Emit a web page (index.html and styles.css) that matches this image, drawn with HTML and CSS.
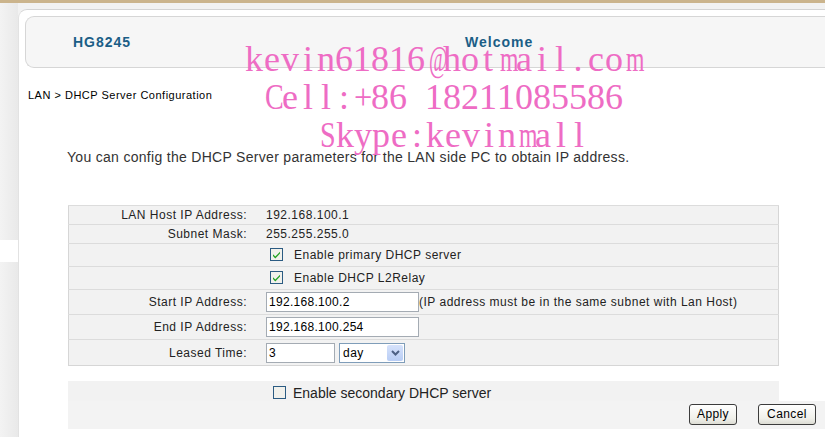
FILE: index.html
```html
<!DOCTYPE html>
<html>
<head>
<meta charset="utf-8">
<link rel="stylesheet" href="styles.css">
</head>
<body>
<div class="top-edge"></div>
<div class="page">
  <div class="sidebar">
    <div class="side-a"></div>
    <div class="side-gap"></div>
    <div class="side-b"></div>
  </div>
  <div class="main">
    <div class="header">
      <span class="model">HG8245</span>
      <span class="welcome">Welcome</span>
    </div>
    <div class="crumb">LAN &gt; DHCP Server Configuration</div>
    <div class="desc">You can config the DHCP Server parameters for the LAN side PC to obtain IP address.</div>
    <table class="cfg">
      <tr class="r1"><td class="lbl">LAN Host IP Address:</td><td class="val">192.168.100.1</td></tr>
      <tr class="r1"><td class="lbl">Subnet Mask:</td><td class="val">255.255.255.0</td></tr>
      <tr class="r2"><td class="lbl"></td><td class="val"><span class="cb on"><svg width="13" height="13" viewBox="0 0 13 13"><rect x="0.5" y="0.5" width="12" height="12" fill="#f1f1ec" stroke="#2b5b82"/><path d="M3 6.2 L5.3 8.6 L10 3.8 L10 5.6 L5.3 10.4 L3 8 Z" fill="#21a121"/></svg></span>Enable primary DHCP server</td></tr>
      <tr class="r2"><td class="lbl"></td><td class="val"><span class="cb on"><svg width="13" height="13" viewBox="0 0 13 13"><rect x="0.5" y="0.5" width="12" height="12" fill="#f1f1ec" stroke="#2b5b82"/><path d="M3 6.2 L5.3 8.6 L10 3.8 L10 5.6 L5.3 10.4 L3 8 Z" fill="#21a121"/></svg></span>Enable DHCP L2Relay</td></tr>
      <tr class="r3"><td class="lbl">Start IP Address:</td><td class="val"><span class="inp w152">192.168.100.2</span><span class="hint">(IP address must be in the same subnet with Lan Host)</span></td></tr>
      <tr class="r3"><td class="lbl">End IP Address:</td><td class="val"><span class="inp w152">192.168.100.254</span></td></tr>
      <tr class="r4"><td class="lbl">Leased Time:</td><td class="val"><span class="inp w68">3</span><span class="sel"><span class="sel-txt">day</span><span class="sel-btn"><svg width="9" height="6" viewBox="0 0 9 6"><path d="M1 1 L4.5 4.5 L8 1" fill="none" stroke="#4d6185" stroke-width="2"/></svg></span></span></td></tr>
    </table>
    <div class="second">
      <span class="cb"><svg width="13" height="13" viewBox="0 0 13 13"><rect x="0.5" y="0.5" width="12" height="12" fill="#f1f1ec" stroke="#2b5b82"/></svg></span>Enable secondary DHCP server
    </div>
    <div class="buttons">
      <span class="btn apply">Apply</span>
      <span class="btn cancel">Cancel</span>
    </div>
  </div>
</div>
<div class="watermark">
  <div class="wm l1"><i>k</i><i>e</i><i>v</i><i>i</i><i>n</i><i>6</i><i>1</i><i>8</i><i>1</i><i>6</i><i class="at">@</i><i>h</i><i>o</i><i>t</i><i class="m">m</i><i>a</i><i>i</i><i>l</i><i>.</i><i>c</i><i>o</i><i class="m">m</i></div>
  <div class="wm l2"><i class="cap">C</i><i>e</i><i>l</i><i>l</i><i>:</i><i class="pl">+</i><i>8</i><i>6</i><i> </i><i>1</i><i>8</i><i>2</i><i>1</i><i>1</i><i>0</i><i>8</i><i>5</i><i>5</i><i>8</i><i>6</i></div>
  <div class="wm l3"><i class="cap">S</i><i>k</i><i>y</i><i>p</i><i>e</i><i>:</i><i>k</i><i>e</i><i>v</i><i>i</i><i>n</i><i class="m">m</i><i>a</i><i>l</i><i>l</i></div>
</div>
</body>
</html>
```
FILE: styles.css
```css
html, body {
  margin: 0;
  padding: 0;
  background: #ffffff;
  overflow: hidden;
}
body {
  font-family: "Liberation Sans", Arial, sans-serif;
  color: #000;
  width: 825px;
  height: 437px;
  position: relative;
}
.top-edge {
  height: 3px;
  background: #cbb48c;
}
.page {
  display: flex;
  height: 434px;
  background: #f2f2f2;
}
.sidebar {
  width: 18px;
  display: flex;
  flex-direction: column;
}
.side-a {
  height: 237px;
  background: linear-gradient(to right, #f3f3f3, #e9e9e9);
}
.side-gap {
  height: 22px;
  background: #ffffff;
}
.side-b {
  flex: 1;
  background: linear-gradient(to right, #f3f3f3, #e9e9e9);
}
.main {
  flex: 1;
  margin-top: 6px;
  background: #ffffff;
  border-top: 1px solid #d4d4d4;
  border-left: 1px solid #e2e2e2;
  border-top-left-radius: 9px;
  min-width: 0;
}
.header {
  margin: 6px 0 0 6px;
  height: 50px;
  border: 1px solid #d6d6d6;
  border-right: none;
  border-radius: 9px 0 0 9px;
  background: #f6f6f6;
  display: flex;
  align-items: center;
  font-weight: bold;
  font-size: 14px;
  letter-spacing: 1px;
  color: #1b5e86;
}
.model {
  margin-left: 47px;
  width: 392px;
}
.crumb {
  margin: 20px 0 0 9px;
  font-size: 11px;
  line-height: 14px;
  letter-spacing: 0.5px;
  color: #000;
}
.desc {
  margin: 46px 0 0 48px;
  font-size: 14px;
  line-height: 18px;
  letter-spacing: 0.3px;
  color: #333;
}
.cfg {
  margin: 39px 0 0 49px;
  width: 711px;
  border-collapse: collapse;
  background: #f2f2f2;
  border: 1px solid #d6d6d6;
  font-size: 12px;
  letter-spacing: 0.5px;
}
.cfg td {
  border-top: 1px solid #dcdcdc;
  padding: 0;
  color: #222;
}
.cfg tr.r1 td { height: 18px; }
.cfg tr.r2 td { height: 22px; }
.cfg tr.r3 td { height: 24px; }
.cfg tr.r4 td { height: 25px; }
.cfg td.lbl {
  width: 178px;
  text-align: right;
  padding-right: 19px;
}
.cfg td.val {
  vertical-align: middle;
}
.cb {
  display: inline-block;
  width: 13px;
  height: 13px;
  vertical-align: -2px;
  margin: 0 11px 0 4px;
}
.cb svg { display: block; }
.inp {
  display: inline-block;
  box-sizing: border-box;
  height: 20px;
  border: 1px solid #a4abb3;
  background: #fff;
  padding: 2px 2px 0;
  line-height: 15px;
  vertical-align: middle;
  color: #000;
  letter-spacing: 0.3px;
}
.w152 { width: 153px; }
.w68 { width: 69px; }
.hint {
  vertical-align: middle;
  color: #222;
}
.sel {
  display: inline-flex;
  box-sizing: border-box;
  width: 66px;
  height: 20px;
  margin-left: 4px;
  border: 1px solid #7f9db9;
  background: #fff;
  vertical-align: middle;
}
.sel-txt {
  flex: 1;
  padding: 2px 0 0 3px;
  line-height: 15px;
  color: #000;
}
.sel-btn {
  width: 16px;
  margin: 1px;
  background: linear-gradient(#d6e2fb, #b8cdf5);
  border-radius: 2px;
  display: flex;
  align-items: center;
  justify-content: center;
}
.second {
  margin: 15px 0 0 49px;
  width: 506px;
  height: 20px;
  padding-left: 205px;
  background: #f2f2f2;
  font-size: 14px;
  line-height: 24px;
  color: #222;
}
.second .cb { margin: 0 7px 0 0; vertical-align: -1px; }
.buttons {
  margin-left: 49px;
  height: 28px;
  background: #f3f3f3;
  display: flex;
  align-items: flex-start;
  padding-left: 621px;
  gap: 21px;
}
.btn {
  box-sizing: border-box;
  height: 21px;
  margin-top: 3px;
  border: 1px solid #3c3c3c;
  border-radius: 3px;
  background: linear-gradient(#ffffff, #f0f0ea 70%, #dcdcd4);
  font-size: 12px;
  line-height: 19px;
  letter-spacing: 0.4px;
  text-align: center;
  color: #000;
}
.apply { width: 48px; }
.cancel { width: 58px; }
.watermark {
  position: absolute;
  left: 245px;
  top: 40px;
  pointer-events: none;
}
.wm {
  font-family: "Liberation Serif", "DejaVu Serif", serif;
  font-size: 36px;
  line-height: 38px;
  height: 38px;
  color: #ee6cc4;
  white-space: nowrap;
}
.wm i {
  display: inline-block;
  width: 18px;
  text-align: center;
  font-style: normal;
  white-space: pre;
}
.wm i.m { transform: scaleX(0.66); }
.wm i.at { transform: scaleX(0.56); }
.wm i.cap { transform: scaleX(0.78); }
.wm i.pl { transform: scaleX(0.9); }
.l2 { margin-left: 18px; }
.l3 { margin-left: 73px; }
```
